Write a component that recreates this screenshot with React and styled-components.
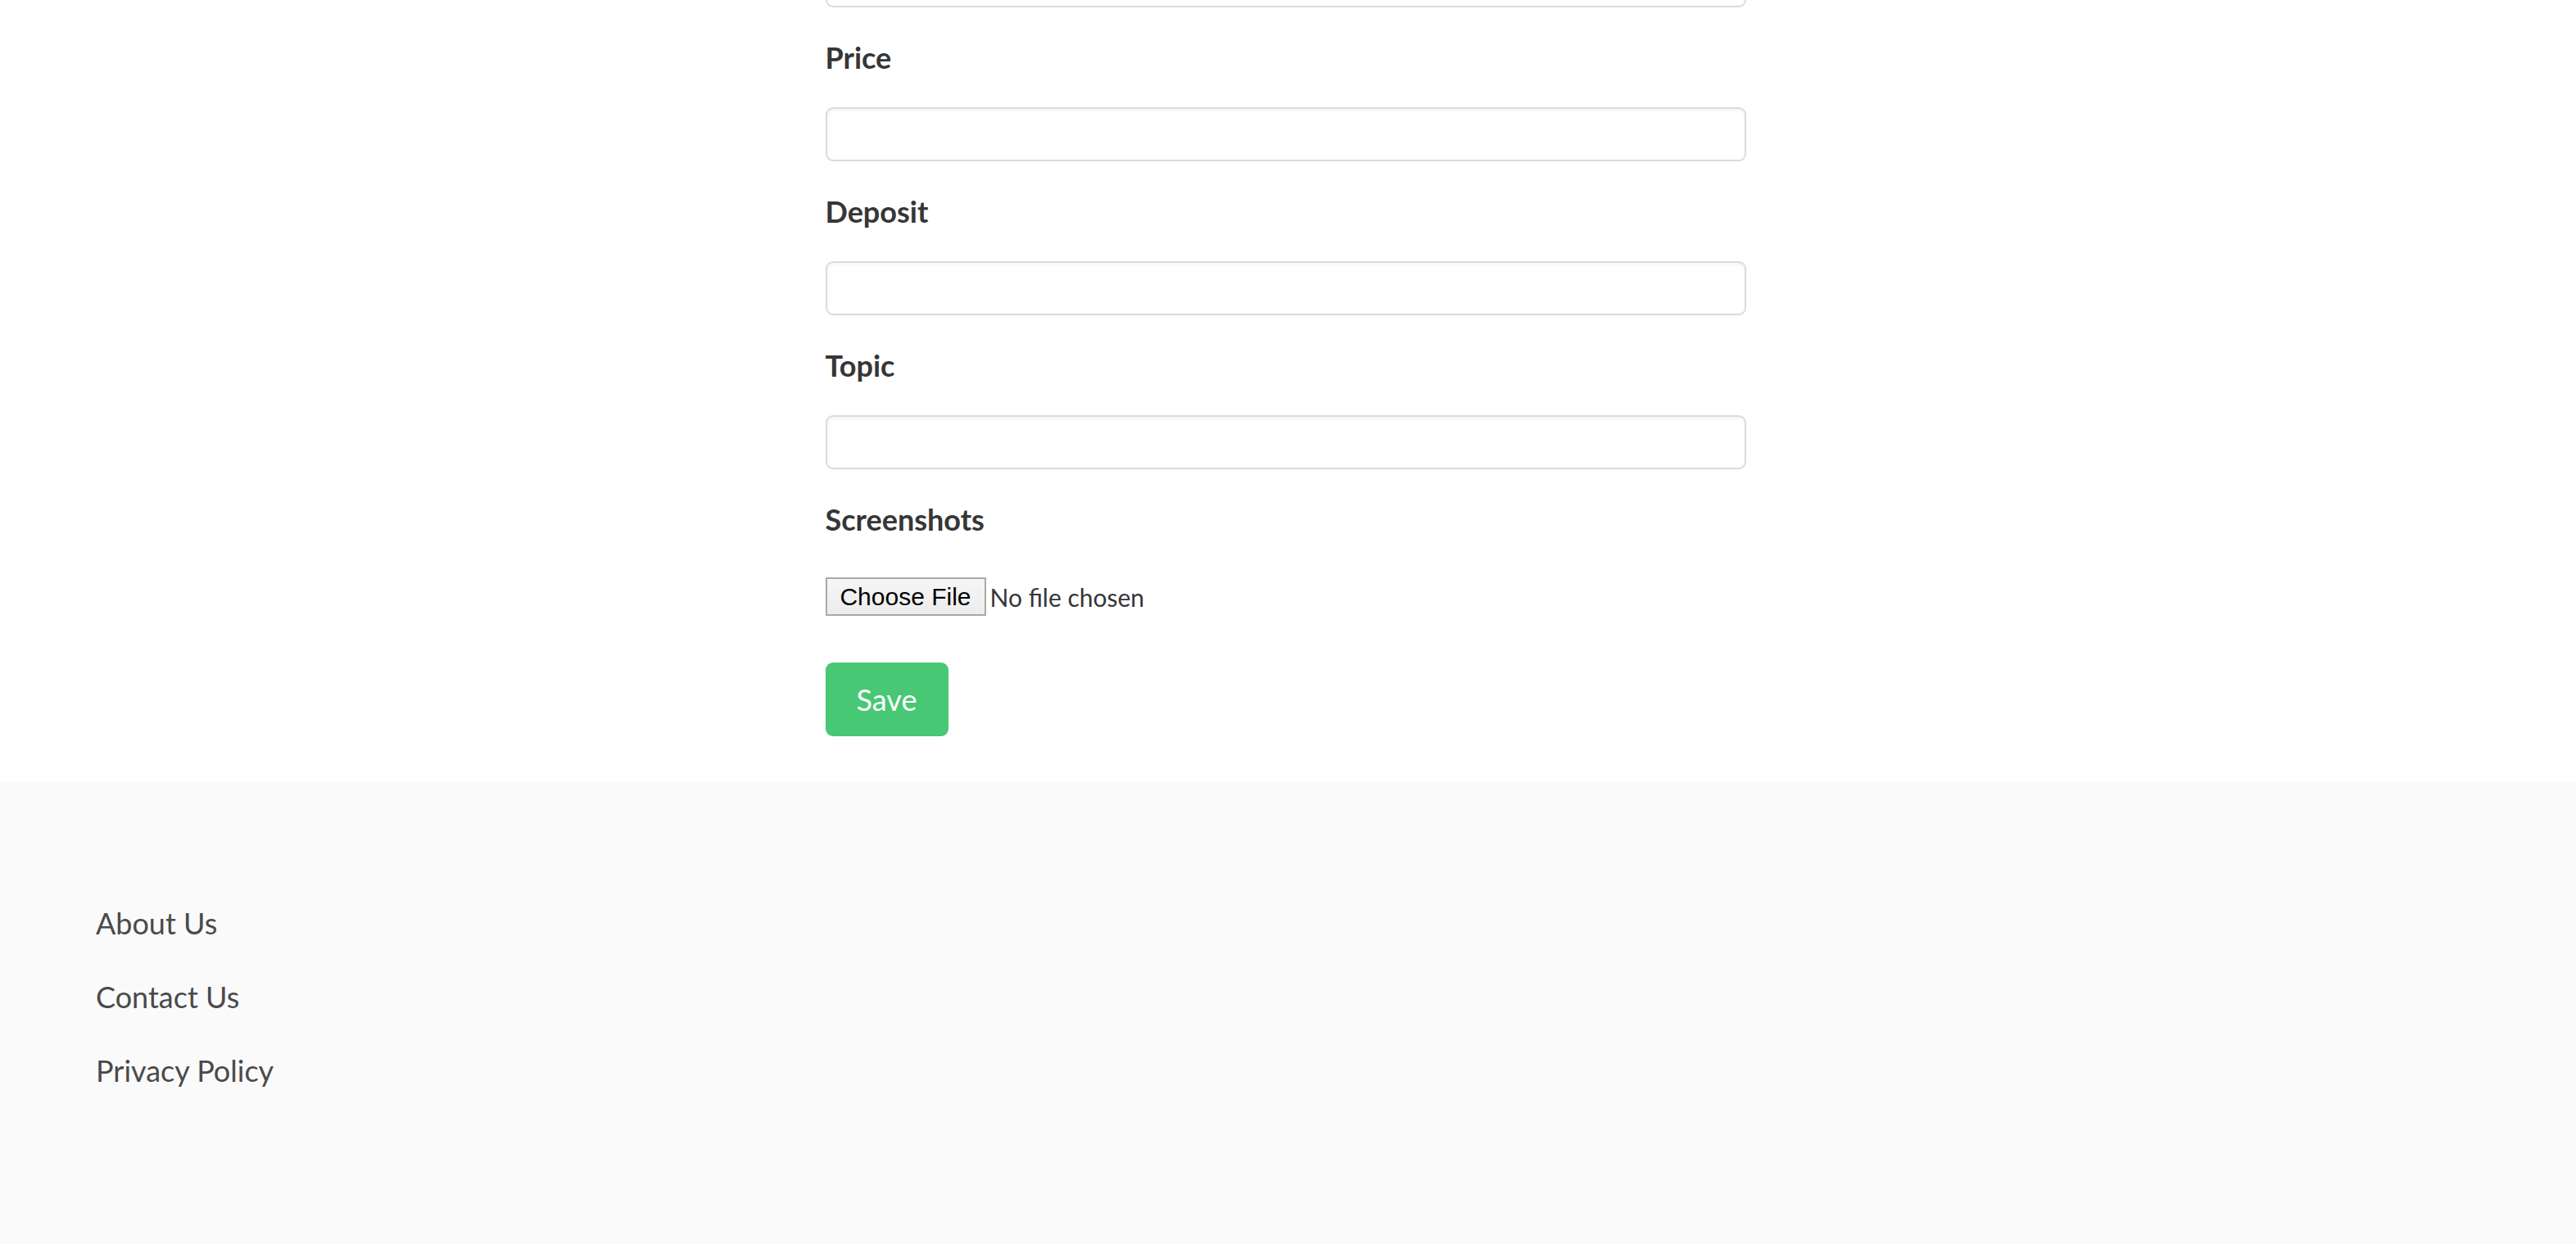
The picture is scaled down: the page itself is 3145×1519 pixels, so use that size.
import React from "react"
import styled, { createGlobalStyle } from "styled-components"

const GlobalStyle = createGlobalStyle`
  html, body {
    margin: 0;
    padding: 0;
    background: #ffffff;
  }
  body {
    font-family: Lato, "Open Sans", "Noto Sans", sans-serif;
    color: #4a4a4a;
    overflow: hidden;
  }
  * {
    box-sizing: border-box;
  }
`

const Page = styled.div`
  display: flex;
  flex-direction: column;
  min-height: 1519px;
`

const Main = styled.main`
  display: flex;
  justify-content: center;
  padding-right: 6px;
  background: #ffffff;
`

const Form = styled.form`
  width: 1124px;
  display: flex;
  flex-direction: column;
  gap: 34px;
  margin-top: -57px;
  padding-bottom: 56px;
`

const Field = styled.div`
  display: flex;
  flex-direction: column;
`

const Label = styled.label`
  font-size: 36px;
  line-height: 54px;
  font-weight: 700;
  color: #363636;
  margin-bottom: 34px;
`

const Input = styled.input`
  width: 100%;
  height: 66px;
  border: 2px solid #dbdbdb;
  border-radius: 9px;
  background: #ffffff;
  box-shadow: inset 0 2px 4px rgba(10, 10, 10, 0.05);
  padding: 0 20px;
  font-size: 27px;
  font-family: inherit;
  color: #363636;
  outline: none;
`

const FileRow = styled.div`
  display: flex;
  align-items: center;
  height: 47px;
  margin-top: 10px;
  margin-bottom: 57px;
`

const FileButton = styled.span`
  display: inline-flex;
  align-items: center;
  justify-content: center;
  width: 196px;
  height: 47px;
  border: 2px solid #a9a9a9;
  background: linear-gradient(#f6f6f6, #ececec);
  font-family: "Liberation Sans", Arial, sans-serif;
  font-size: 30px;
  color: #000000;
`

const FileText = styled.span`
  margin-left: 5px;
  font-size: 30px;
  color: #363636;
`

const SaveButton = styled.button`
  width: 150px;
  height: 90px;
  border: none;
  border-radius: 9px;
  background: #48c774;
  color: #ffffff;
  font-family: inherit;
  font-size: 36px;
  cursor: pointer;
`

const Footer = styled.footer`
  flex: 1;
  background: #fafafa;
  padding: 145px 117px 200px;
  display: flex;
  flex-direction: column;
  gap: 36px;
`

const FooterLink = styled.a`
  font-size: 36px;
  line-height: 54px;
  color: #4a4a4a;
  text-decoration: none;
`

const fields = ["Price", "Deposit", "Topic"]

const App = () => {
  return (
    <Page>
      <GlobalStyle />
      <Main>
        <Form onSubmit={(e) => e.preventDefault()}>
          <Input type="text" />
          {fields.map((name) => (
            <Field key={name}>
              <Label>{name}</Label>
              <Input type="text" />
            </Field>
          ))}
          <Field>
            <Label>Screenshots</Label>
            <FileRow>
              <FileButton>Choose File</FileButton>
              <FileText>No file chosen</FileText>
            </FileRow>
            <div>
              <SaveButton type="submit">Save</SaveButton>
            </div>
          </Field>
        </Form>
      </Main>
      <Footer>
        <FooterLink href="#">About Us</FooterLink>
        <FooterLink href="#">Contact Us</FooterLink>
        <FooterLink href="#">Privacy Policy</FooterLink>
      </Footer>
    </Page>
  )
}

export default App
